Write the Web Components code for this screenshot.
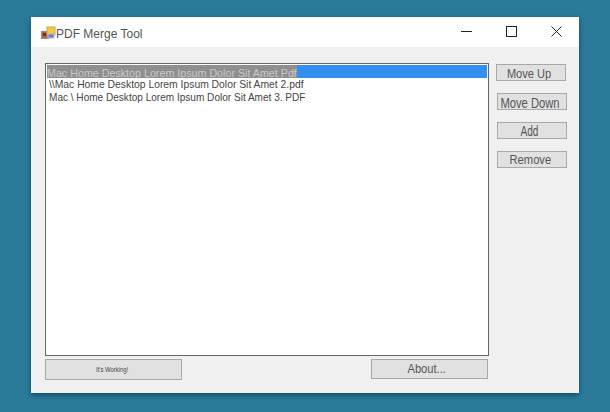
<!DOCTYPE html>
<html>
<head>
<meta charset="utf-8">
<title>PDF Merge Tool</title>
<style>
  html, body { margin: 0; padding: 0; }
  body { width: 610px; height: 412px; overflow: hidden; background: #2b7a9a; font-family: "Liberation Sans", Arial, sans-serif; }
</style>
</head>
<body>
<merge-window title-text="PDF Merge Tool">
  <file-list slot="list">
    <file-row selected style="--sx:.973">Mac Home Desktop Lorem Ipsum Dolor Sit Amet Pdf</file-row>
    <file-row style="--sx:.94">\\Mac Home Desktop Lorem Ipsum Dolor Sit Amet 2.pdf</file-row>
    <file-row style="--sx:.914">Mac \ Home Desktop Lorem Ipsum Dolor Sit Amet 3. PDF</file-row>
  </file-list>
  <win-button slot="side" style="--size:12px;--sx:.92;--pt:3px;--pr:4px">Move Up</win-button>
  <win-button slot="side" style="--ml:1px;--mt:12px;--size:14px;--sx:.8;--pt:2px;--pr:5px">Move Down</win-button>
  <win-button slot="side" style="--ml:1px;--mt:12px;--size:14px;--sx:.72;--pr:6px">Add</win-button>
  <win-button slot="side" style="--ml:1px;--mt:12px;--size:12px;--sx:.93;--pt:1px;--pr:4px">Remove</win-button>
  <win-button slot="status" style="--w:137px;--h:21px;--size:7px;--sx:.84;--color:#444;--pr:2px">It's Working!</win-button>
  <win-button slot="about" style="--w:117px;--h:20px;--size:12px;--sx:.93;--pr:6px">About...</win-button>
</merge-window>

<script>
class winButton extends HTMLElement {
  constructor() {
    super();
    this.attachShadow({ mode: 'open' });
    this.shadowRoot.innerHTML = `
      <style>
        :host {
          display: flex;
          box-sizing: border-box;
          width: var(--w, 70px);
          height: var(--h, 17px);
          margin-left: var(--ml, 0);
          margin-top: var(--mt, 0);
          padding-top: var(--pt, 0);
          padding-right: var(--pr, 0);
          align-items: center;
          justify-content: center;
          border: 1px solid #a8a8a8;
          background: #e1e1e1;
          color: var(--color, #555);
          font-size: var(--size, 12px);
          white-space: nowrap;
          overflow: hidden;
        }
        span { display: inline-block; transform: scaleX(var(--sx, 1)); }
      </style>
      <span><slot></slot></span>
    `;
  }
}

class fileRow extends HTMLElement {
  constructor() {
    super();
    this.attachShadow({ mode: 'open' });
    this.shadowRoot.innerHTML = `
      <style>
        :host {
          display: block;
          height: 13px;
          line-height: 13px;
          padding-left: 2px;
          color: #454545;
          font-size: 11px;
          white-space: nowrap;
        }
        :host([selected]) {
          line-height: 16px;
          padding-left: 0;
          overflow: hidden;
          background: linear-gradient(to right, #8f8f8f 250px, #3390f0 250px);
          color: #c9c9c9;
        }
        span { display: inline-block; transform: scaleX(var(--sx, 1)); transform-origin: left center; }
      </style>
      <span><slot></slot></span>
    `;
  }
}

class fileList extends HTMLElement {
  constructor() {
    super();
    this.attachShadow({ mode: 'open' });
    this.shadowRoot.innerHTML = `
      <style>
        :host {
          display: block;
          box-sizing: border-box;
          width: 444px;
          height: 293px;
          padding: 1px 1px 0 1px;
          border: 1px solid #666;
          background: #fff;
        }
      </style>
      <slot></slot>
    `;
  }
}

class mergeWindow extends HTMLElement {
  constructor() {
    super();
    this.attachShadow({ mode: 'open' });
    this.shadowRoot.innerHTML = `
      <style>
        :host {
          display: flex;
          flex-direction: column;
          box-sizing: border-box;
          width: 548px;
          height: 376px;
          margin: 17px 0 0 31px;
          background: #f0f0f0;
          box-shadow: 0 2px 5px rgba(0, 30, 50, .55);
        }
        #title-bar {
          display: flex;
          align-items: center;
          height: 30px;
          padding-left: 10px;
          background: #fff;
          color: #555;
          font-size: 12px;
        }
        #title-bar svg { display: block; }
        #title-text { flex: 1; margin-top: 3px; }
        #logo { margin-top: 1px; }
        .control { display: flex; justify-content: center; align-items: center; width: 45px; height: 30px; margin-top: -2px; }
        #content {
          display: grid;
          grid-template-columns: 444px 70px;
          grid-template-rows: 293px 21px;
          column-gap: 7px;
          row-gap: 3px;
          padding: 16px 0 0 14px;
        }
        #side { display: flex; flex-direction: column; padding-top: 1px; }
        #bottom { display: flex; justify-content: space-between; padding-right: 1px; }
      </style>
      <div id="title-bar">
        <svg id="logo" width="15" height="14" viewBox="0 0 15 14">
          <rect x="0.5" y="5.5" width="7" height="7" fill="#c8643c" stroke="#8a8aa8"/>
          <rect x="6" y="1" width="8" height="8" fill="#f3c93c" stroke="#c9a64a"/>
          <rect x="7" y="8" width="6" height="4" fill="#6c7fc0" stroke="#b8bcd8"/>
          <rect x="2" y="7" width="3" height="3" fill="#5a3a30"/>
        </svg>
        <span id="title-text"></span>
        <span class="control">
          <svg width="11" height="11" viewBox="0 0 11 11"><path d="M0 5.5H11" stroke="#222" fill="none"/></svg>
        </span>
        <span class="control">
          <svg width="11" height="11" viewBox="0 0 11 11"><rect x=".5" y=".5" width="10" height="10" stroke="#222" fill="none"/></svg>
        </span>
        <span class="control">
          <svg width="11" height="11" viewBox="0 0 11 11"><path d="M.5 .5L10.5 10.5M10.5 .5L.5 10.5" stroke="#222" fill="none"/></svg>
        </span>
      </div>
      <div id="content">
        <slot name="list"></slot>
        <div id="side"><slot name="side"></slot></div>
        <div id="bottom"><slot name="status"></slot><slot name="about"></slot></div>
      </div>
    `;
    this.shadowRoot.querySelector('#title-text').textContent = this.getAttribute('title-text');
  }
}

customElements.define('win-button', winButton);
customElements.define('file-row', fileRow);
customElements.define('file-list', fileList);
customElements.define('merge-window', mergeWindow);
</script>
</body>
</html>
